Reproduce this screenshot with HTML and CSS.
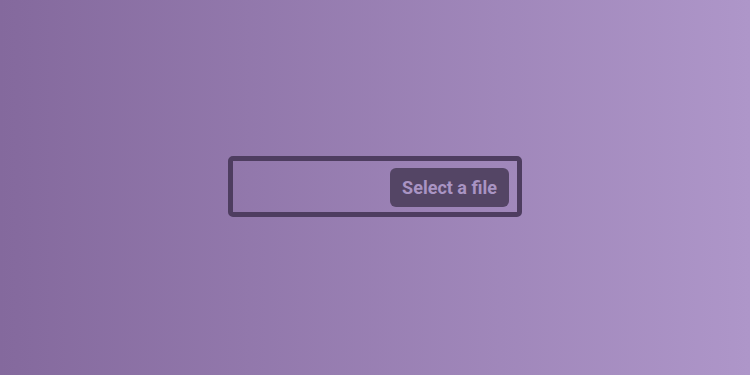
FILE: index.html
```html
<!DOCTYPE html>
<html>
<head>
<meta charset="utf-8">
<link rel="stylesheet" href="styles.css">
</head>
<body>
<div class="stage">
  <label class="file-box">
    <span class="file-btn">Select a file</span>
  </label>
</div>
</body>
</html>
```
FILE: styles.css
```css
html, body {
  margin: 0;
  padding: 0;
  width: 750px;
  height: 375px;
  overflow: hidden;
}
.stage {
  width: 750px;
  height: 375px;
  background: linear-gradient(to right, #84699d, #ae96c9);
  display: flex;
  align-items: center;
  justify-content: center;
}
.file-box {
  box-sizing: border-box;
  width: 294px;
  height: 61px;
  border: 5px solid #4e3d60;
  border-radius: 5px;
  display: flex;
  align-items: center;
  justify-content: flex-end;
  padding: 2px 8px 0 0;
  margin-top: -2px;
}
.file-btn {
  box-sizing: border-box;
  width: 119px;
  height: 39px;
  background: #544565;
  border-radius: 6px;
  color: #a994c3;
  font-family: Roboto, "Liberation Sans", sans-serif;
  font-weight: 700;
  font-size: 18px;
  display: flex;
  align-items: center;
  justify-content: center;
}
```
